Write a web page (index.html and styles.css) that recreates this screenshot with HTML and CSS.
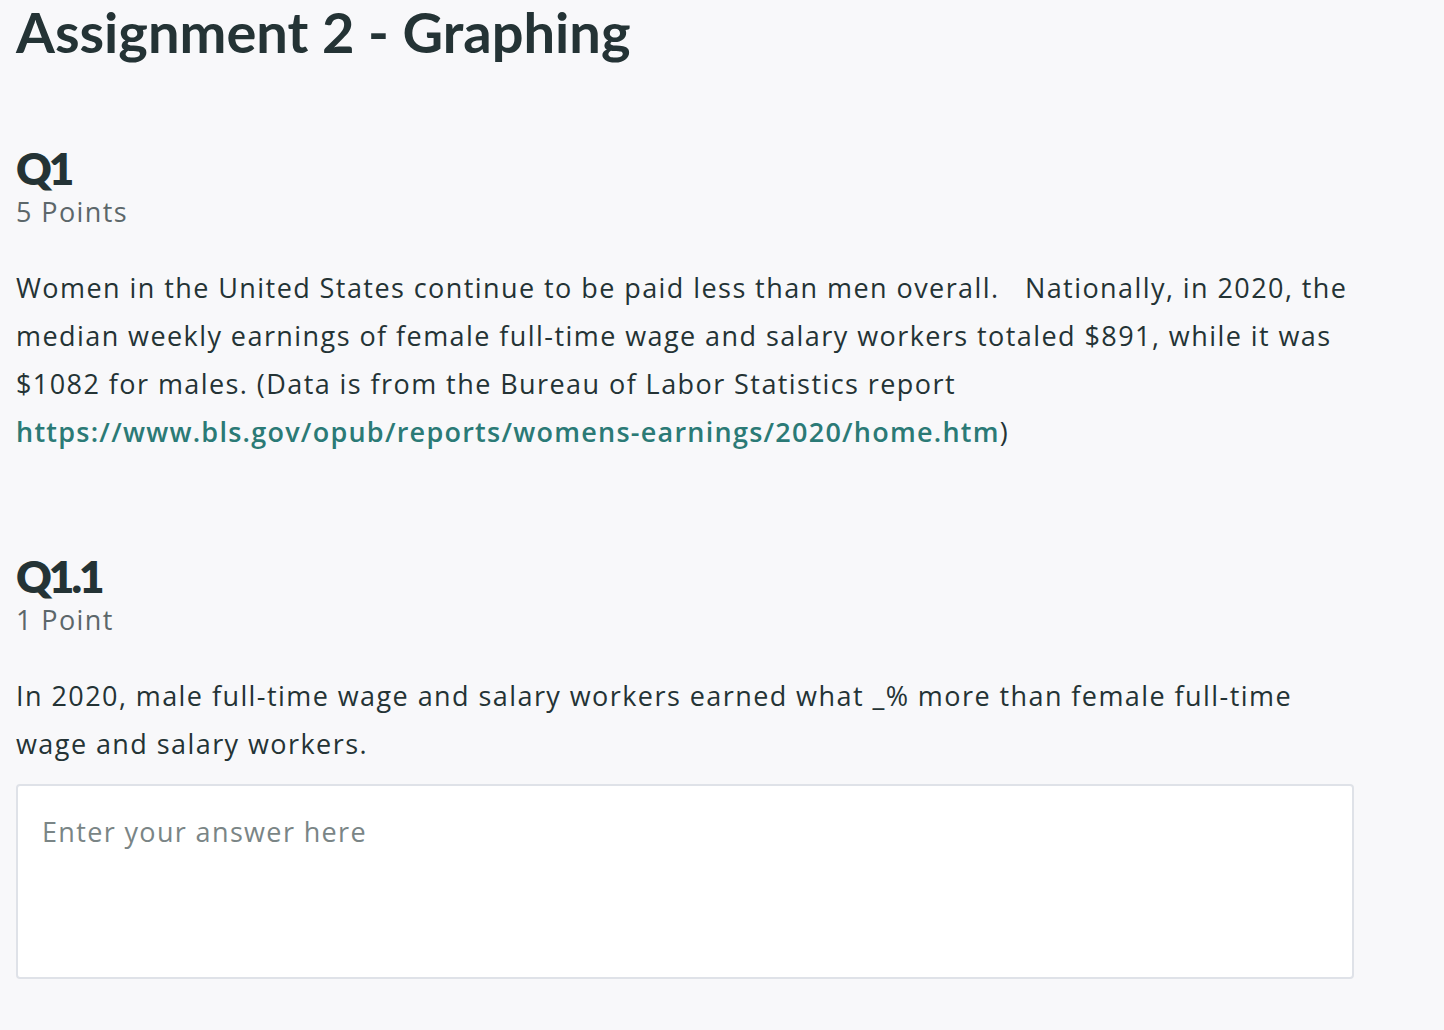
FILE: index.html
```html
<!DOCTYPE html>
<html>
<head>
<meta charset="utf-8">
<link rel="stylesheet" href="styles.css">
</head>
<body>
<main class="page">
  <h1 class="title">Assignment 2 - Graphing</h1>
  <section class="question">
    <h2 class="q-name">Q1</h2>
    <div class="q-points">5 Points</div>
    <p class="q-text">Women in the United States continue to be paid less than men overall. &nbsp; Nationally, in 2020, the median weekly earnings of female full-time wage and salary workers totaled $891, while it was $1082 for males. (Data is from the Bureau of Labor Statistics report <a class="link" href="#">https://www.bls.gov/opub/reports/womens-earnings/2020/home.htm</a>)</p>
  </section>
  <section class="question sub">
    <h2 class="q-name">Q1.1</h2>
    <div class="q-points">1 Point</div>
    <p class="q-text">In 2020, male full-time wage and salary workers earned what _% more than female full-time wage and salary workers.</p>
    <textarea class="answer" placeholder="Enter your answer here"></textarea>
  </section>
</main>
</body>
</html>
```
FILE: styles.css
```css
html, body {
  margin: 0;
  padding: 0;
  background: #f8f8fa;
}
body {
  font-family: "Open Sans", Lato, sans-serif;
  color: #243335;
}
.page {
  padding: 0 0 0 16px;
  width: 1338px;
}
.title {
  margin: 0;
  font-family: Lato, sans-serif;
  font-size: 56px;
  line-height: 64px;
  font-weight: 700;
  color: #243335;
}
.question {
  margin-top: 80px;
}
.question.sub {
  margin-top: 96px;
}
.q-name {
  margin: 0;
  font-family: Lato, sans-serif;
  font-size: 44px;
  line-height: 48px;
  font-weight: 800;
  letter-spacing: -3px;
}
.q-points {
  font-size: 27px;
  line-height: 40px;
  letter-spacing: 1.4px;
  color: #5c676a;
}
.q-text {
  margin: 32px 0 0 0;
  font-size: 27px;
  line-height: 48px;
  letter-spacing: 1.43px;
}
.link {
  color: #2b7a76;
  font-weight: 600;
  letter-spacing: 1.25px;
  text-decoration: none;
  white-space: nowrap;
}
.answer {
  display: block;
  box-sizing: border-box;
  width: 1338px;
  height: 195px;
  margin-top: 16px;
  padding: 26px 24px;
  border: 2px solid #dfe2e8;
  border-radius: 4px;
  background: #fff;
  font-family: "Open Sans", Lato, sans-serif;
  font-size: 27px;
  line-height: 40px;
  letter-spacing: 1.35px;
  color: #243335;
  resize: none;
  outline: none;
}
.answer::placeholder {
  color: #7a8586;
  opacity: 1;
}
```
